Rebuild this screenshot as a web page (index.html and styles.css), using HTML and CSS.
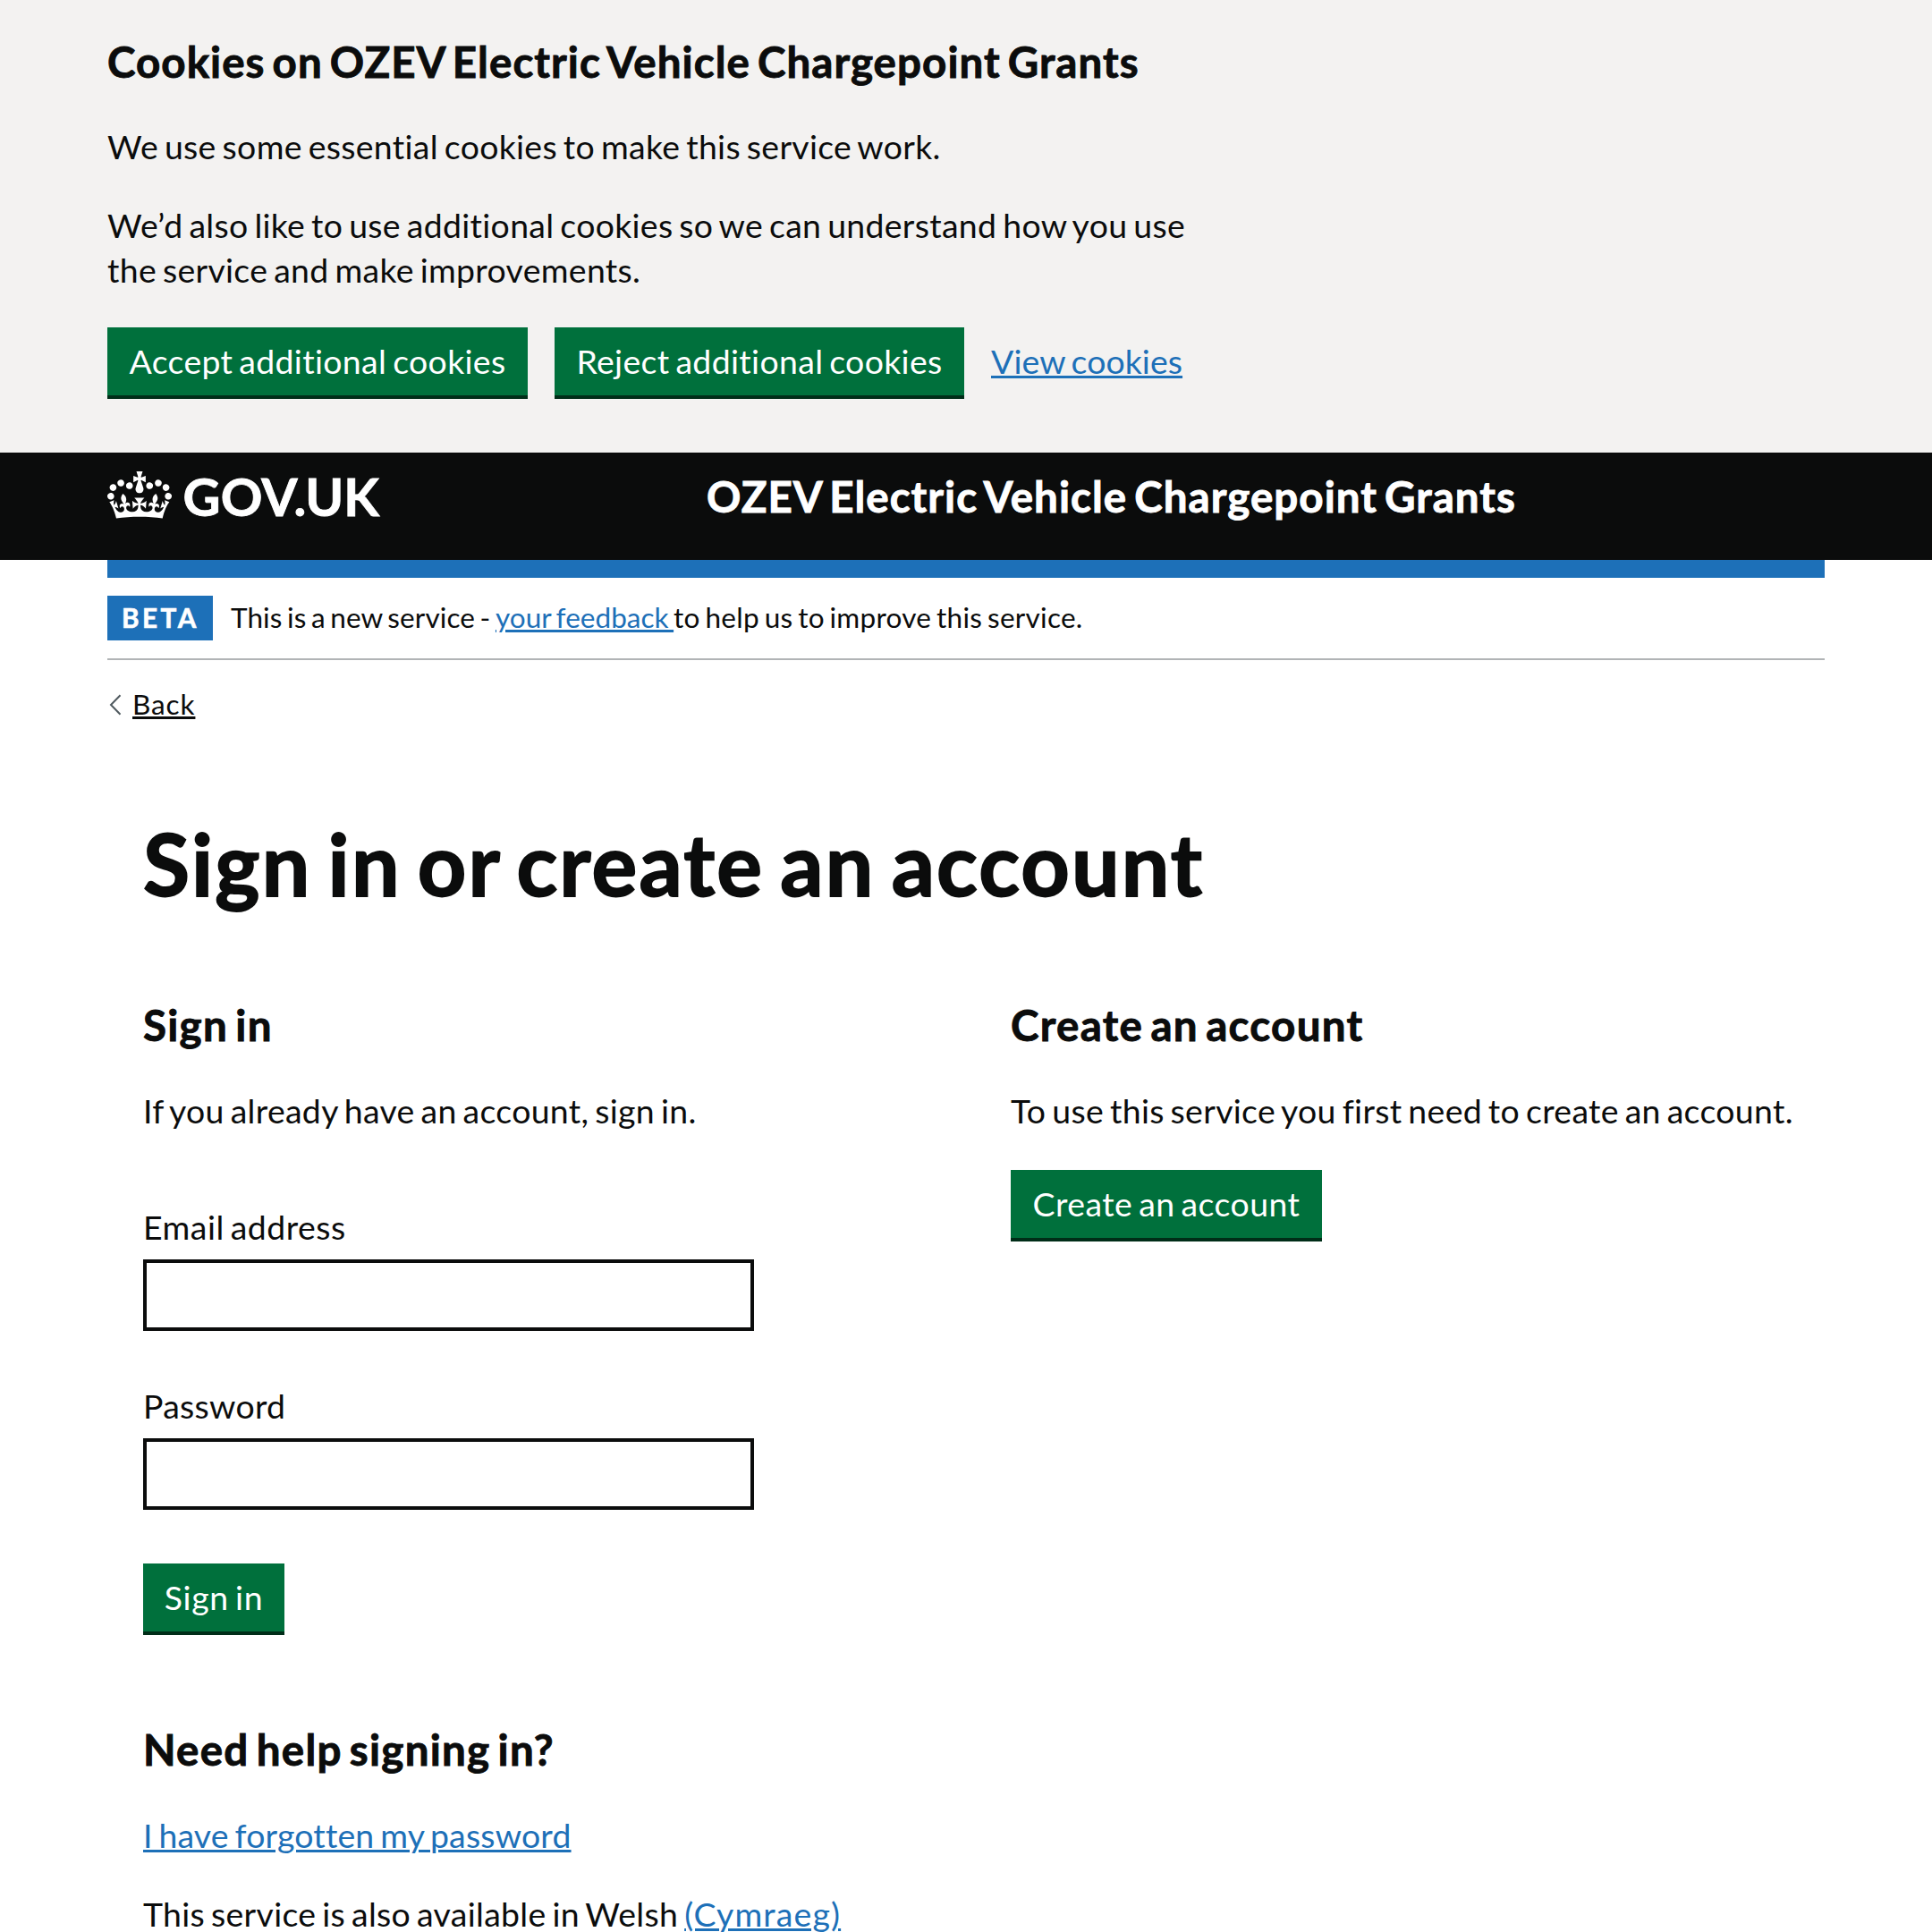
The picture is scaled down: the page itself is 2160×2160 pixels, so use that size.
FILE: index.html
```html
<!DOCTYPE html>
<html lang="en">
<head>
<meta charset="utf-8">
<title>Sign in or create an account</title>
<link rel="stylesheet" href="styles.css">
</head>
<body>
<section class="cookies">
  <div class="container">
    <h2 class="heading heading--tight">Cookies on OZEV Electric Vehicle Chargepoint Grants</h2>
    <p class="text">We use some essential cookies to make this service work.</p>
    <p class="text">We’d also like to use additional cookies so we can understand how you use<br>the service and make improvements.</p>
    <div class="cookies__actions">
      <button class="button button--accept" type="button">Accept additional cookies</button>
      <button class="button button--reject" type="button">Reject additional cookies</button>
      <a class="link cookies__link" href="#">View cookies</a>
    </div>
  </div>
</section>

<header class="header">
  <div class="container header__inner">
    <a class="logo" href="#">
      <svg class="logo__crown" viewBox="0 0 132 97" aria-hidden="true"><path fill="currentColor" fill-rule="evenodd" d="M25 30.2c3.5 1.5 7.7-.2 9.1-3.7 1.5-3.6-.2-7.8-3.9-9.2-3.6-1.4-7.6.3-9.1 3.9-1.4 3.5.3 7.5 3.9 9zM9 39.5c3.6 1.5 7.8-.2 9.2-3.7 1.5-3.6-.2-7.8-3.9-9.1-3.6-1.5-7.6.2-9.1 3.8-1.4 3.5.3 7.5 3.8 9zM4.4 57.2c3.5 1.5 7.7-.2 9.1-3.8 1.5-3.6-.2-7.7-3.9-9.1-3.5-1.5-7.6.3-9.1 3.8-1.4 3.5.3 7.6 3.9 9.1zm38.3-21.4c3.5 1.5 7.7-.2 9.1-3.8 1.5-3.6-.2-7.7-3.9-9.1-3.6-1.5-7.6.3-9.1 3.8-1.3 3.6.4 7.7 3.9 9.1zm64.4-5.6c-3.6 1.5-7.8-.2-9.1-3.7-1.5-3.6.2-7.8 3.8-9.2 3.6-1.4 7.7.3 9.2 3.9 1.3 3.5-.4 7.5-3.9 9zm15.9 9.3c-3.6 1.5-7.7-.2-9.1-3.7-1.5-3.6.2-7.8 3.7-9.1 3.6-1.5 7.7.2 9.2 3.8 1.5 3.5-.3 7.5-3.8 9zm4.7 17.7c-3.6 1.5-7.8-.2-9.2-3.8-1.5-3.6.2-7.7 3.9-9.1 3.6-1.5 7.7.3 9.2 3.8 1.3 3.5-.4 7.6-3.9 9.1zM89.3 35.8c-3.6 1.5-7.8-.2-9.2-3.8-1.4-3.6.2-7.7 3.9-9.1 3.6-1.5 7.7.3 9.2 3.8 1.4 3.6-.3 7.7-3.9 9.1zM69.7 17.7l8.9 4.7V9.3l-8.9 2.8c-.2-.3-.5-.6-.9-.9L72.4 0H59.6l3.5 11.2c-.3.3-.6.5-.9.9l-8.8-2.8v13.1l8.8-4.7c.3.3.6.7.9.9l-5 15.4v.1c-.2.8-.4 1.6-.4 2.4 0 4.1 3.1 7.5 7 8.1h.2c.3 0 .7.1 1 .1.4 0 .7 0 1-.1h.2c4-.6 7.1-4.1 7.1-8.1 0-.8-.1-1.7-.4-2.4V34l-5.1-15.4c.4-.2.7-.6 1-.9zM66 92.8c16.9 0 32.8 1.1 47.1 3.2 4-16.9 8.9-26.7 14-33.5l-9.6-3.4c1 4.9 1.1 7.2 0 10.2-1.5-1.4-3-4.3-4.2-8.7L108.6 76c2.8-2 5-3.2 7.5-3.3-4.4 9.4-10 11.9-13.6 11.2-4.3-.8-6.3-4.6-5.6-7.9 1-4.7 5.7-5.9 8-.5 4.3-8.7-3-11.4-7.6-8.8 7.1-7.2 7.9-13.5 2.1-21.1-8 6.1-8.1 12.3-4.5 20.8-4.7-5.4-12.1-2.5-9.5 6.2 3.4-5.2 7.9-2 7.2 3.1-.6 4.3-6.4 7.8-13.5 7.2-10.3-.9-10.9-8-11.2-13.8 2.5-.5 7.1 1.8 11 7.3L80.2 60c-4.1 4.4-8 5.3-12.3 5.4 1.4-4.4 8-11.6 8-11.6H55.5s6.4 7.2 7.9 11.6c-4.2-.1-8-1-12.3-5.4l1.4 16.4c3.9-5.5 8.5-7.7 10.9-7.3-.3 5.8-.9 12.8-11.1 13.8-7.2.6-12.9-2.9-13.5-7.2-.7-5 3.8-8.3 7.1-3.1 2.7-8.7-4.6-11.6-9.4-6.2 3.7-8.5 3.6-14.7-4.6-20.8-5.8 7.6-5 13.9 2.2 21.1-4.7-2.6-11.9.1-7.7 8.8 2.3-5.5 7.1-4.2 8.1.5.7 3.3-1.3 7.1-5.7 7.9-3.5.7-9-1.8-13.5-11.2 2.5.1 4.7 1.3 7.5 3.3l-4.7-15.4c-1.2 4.4-2.7 7.2-4.3 8.7-1.1-3-.9-5.3 0-10.2l-9.5 3.4c5 6.9 9.9 16.7 14 33.5 14.8-2.1 30.8-3.2 47.7-3.2z"/></svg>
      <span class="logo__text">GOV.UK</span>
    </a>
    <a class="header__service" href="#">OZEV Electric Vehicle Chargepoint Grants</a>
  </div>
</header>

<div class="container">
  <div class="bar"></div>
  <div class="phase">
    <strong class="phase__tag">BETA</strong>
    <span class="phase__text">This is a new service - <a class="link phase__link" href="#">your feedback </a><span class="phase__rest">to help us to improve this service.</span></span>
  </div>
  <a class="back" href="#">
    <svg class="back__arrow" viewBox="0 0 14 24" aria-hidden="true"><path d="M12.5 1.2L2 12l10.5 10.8" fill="none" stroke="#505a5f" stroke-width="2"/></svg>
    <span class="back__text">Back</span>
  </a>

  <main class="main">
    <h1 class="title">Sign in or create an account</h1>
    <div class="columns">
      <section class="column">
        <h2 class="heading">Sign in</h2>
        <p class="text">If you already have an account, sign in.</p>
        <form class="form">
          <label class="label" for="email">Email address</label>
          <input class="input" id="email" type="email">
          <label class="label label--next" for="password">Password</label>
          <input class="input" id="password" type="password">
          <button class="button button--signin" type="button">Sign in</button>
        </form>
        <h2 class="heading heading--help">Need help signing in?</h2>
        <p class="text"><a class="link forgotten" href="#">I have forgotten my password</a></p>
        <p class="text">This service is also available in Welsh <a class="link welsh" href="#">(Cymraeg)</a></p>
      </section>
      <section class="column">
        <h2 class="heading">Create an account</h2>
        <p class="text">To use this service you first need to create an account.</p>
        <button class="button button--create" type="button">Create an account</button>
      </section>
    </div>
  </main>
</div>
</body>
</html>
```
FILE: styles.css
```css
* { box-sizing: border-box; }

html, body { height: 2160px; overflow: hidden; }

body {
  margin: 0;
  background: #fff;
  color: #0b0c0c;
  font-family: Lato, "Noto Sans", sans-serif;
  font-size: 37.4px;
  line-height: 50px;
  letter-spacing: .33px;
  word-spacing: -3px;
}

h1, h2, p { margin: 0; }

.container { width: 1920px; margin: 0 auto; }

.heading {
  margin-bottom: 40px;
  padding-top: 1px;
  font-size: 47.5px;
  font-weight: 700;
  line-height: 60px;
  letter-spacing: 1.3px;
  word-spacing: -4.6px;
  white-space: nowrap;
  -webkit-text-stroke: .9px currentColor;
}
.heading--tight { letter-spacing: 1.05px; }
.heading--help { margin-top: 102px; letter-spacing: 1.25px; }

.text { white-space: nowrap; }
.text + .text { margin-top: 38px; }

.link {
  color: #1d70b8;
  text-decoration: underline;
  text-decoration-thickness: 3px;
  text-underline-offset: 2px;
}
.forgotten { letter-spacing: .19px; }
.welsh { letter-spacing: 1.15px; }

.button {
  display: block;
  height: 76px;
  padding: 19px 0;
  border: 0;
  background: #00703c;
  box-shadow: 0 4px 0 #002d18;
  color: #fff;
  font: inherit;
  line-height: 38px;
  letter-spacing: .36px;
  word-spacing: inherit;
  text-align: center;
}
.button--accept { width: 470px; }
.button--reject { width: 458px; }
.button--signin { width: 158px; margin-top: 60px; letter-spacing: .7px; }
.button--create { width: 348px; margin-top: 41px; letter-spacing: .45px; }

.cookies { height: 506px; padding-top: 38px; background: #f3f2f1; }
.cookies__actions { display: flex; gap: 30px; margin-top: 39px; }
.cookies__link { padding-top: 19px; line-height: 38px; letter-spacing: .1px; }

.header { height: 120px; background: #0b0c0c; }
.header__inner { display: grid; grid-template-columns: 670px 1fr; }
.logo {
  display: flex;
  gap: 12.5px;
  padding-top: 18.5px;
  color: #fff;
  text-decoration: none;
}
.logo__crown { width: 72px; height: 53px; margin-top: 2.5px; }
.logo__text {
  font-size: 57.9px;
  font-weight: 700;
  line-height: 60px;
  letter-spacing: .1px;
  -webkit-text-stroke: .9px currentColor;
}
.header__service {
  padding-top: 25px;
  color: #fff;
  font-size: 47.5px;
  font-weight: 700;
  line-height: 48px;
  letter-spacing: 1.05px;
  word-spacing: -4.6px;
  text-decoration: none;
  white-space: nowrap;
  -webkit-text-stroke: .9px currentColor;
}

.bar { height: 20px; background: #1d70b8; }

.phase {
  display: flex;
  gap: 20px;
  height: 92px;
  padding-top: 20px;
  border-bottom: 2px solid #b1b4b6;
}
.phase__tag {
  width: 118px;
  height: 50px;
  padding-left: 16px;
  background: #1d70b8;
  color: #fff;
  font-size: 29.7px;
  letter-spacing: 3.5px;
  -webkit-text-stroke: .6px currentColor;
}
.phase__text {
  font-size: 31.5px;
  line-height: 49px;
  letter-spacing: .1px;
  word-spacing: -2.6px;
  white-space: pre;
}
.phase__link { letter-spacing: .03px; }
.phase__rest { letter-spacing: .28px; }

.back {
  display: flex;
  align-items: flex-start;
  gap: 12px;
  height: 40px;
  margin-top: 29px;
  color: #0b0c0c;
  font-size: 31.5px;
  line-height: 41px;
  letter-spacing: .9px;
  text-decoration: none;
}
.back__arrow { width: 14px; height: 24px; margin: 9px 0 0 2px; }
.back__text {
  text-decoration: underline;
  text-decoration-thickness: 3px;
  text-underline-offset: 2px;
}

.main { padding: 0 40px; }
.title {
  margin: 108px 0 101px;
  font-size: 95px;
  font-weight: 700;
  line-height: 100px;
  letter-spacing: 2.15px;
  word-spacing: -7px;
  -webkit-text-stroke: 1.8px currentColor;
}
.columns { display: grid; grid-template-columns: 970px 1fr; }
.columns .heading { padding-top: 0; margin-bottom: 41px; }

.form { margin-top: 80px; }
.label { display: block; letter-spacing: .5px; }
.label--next { margin-top: 59px; letter-spacing: .3px; }
.input {
  display: block;
  width: 683px;
  height: 80px;
  margin-top: 11px;
  padding: 8px;
  border: 4px solid #0b0c0c;
  border-radius: 0;
  background: #fff;
  font: inherit;
}
```
